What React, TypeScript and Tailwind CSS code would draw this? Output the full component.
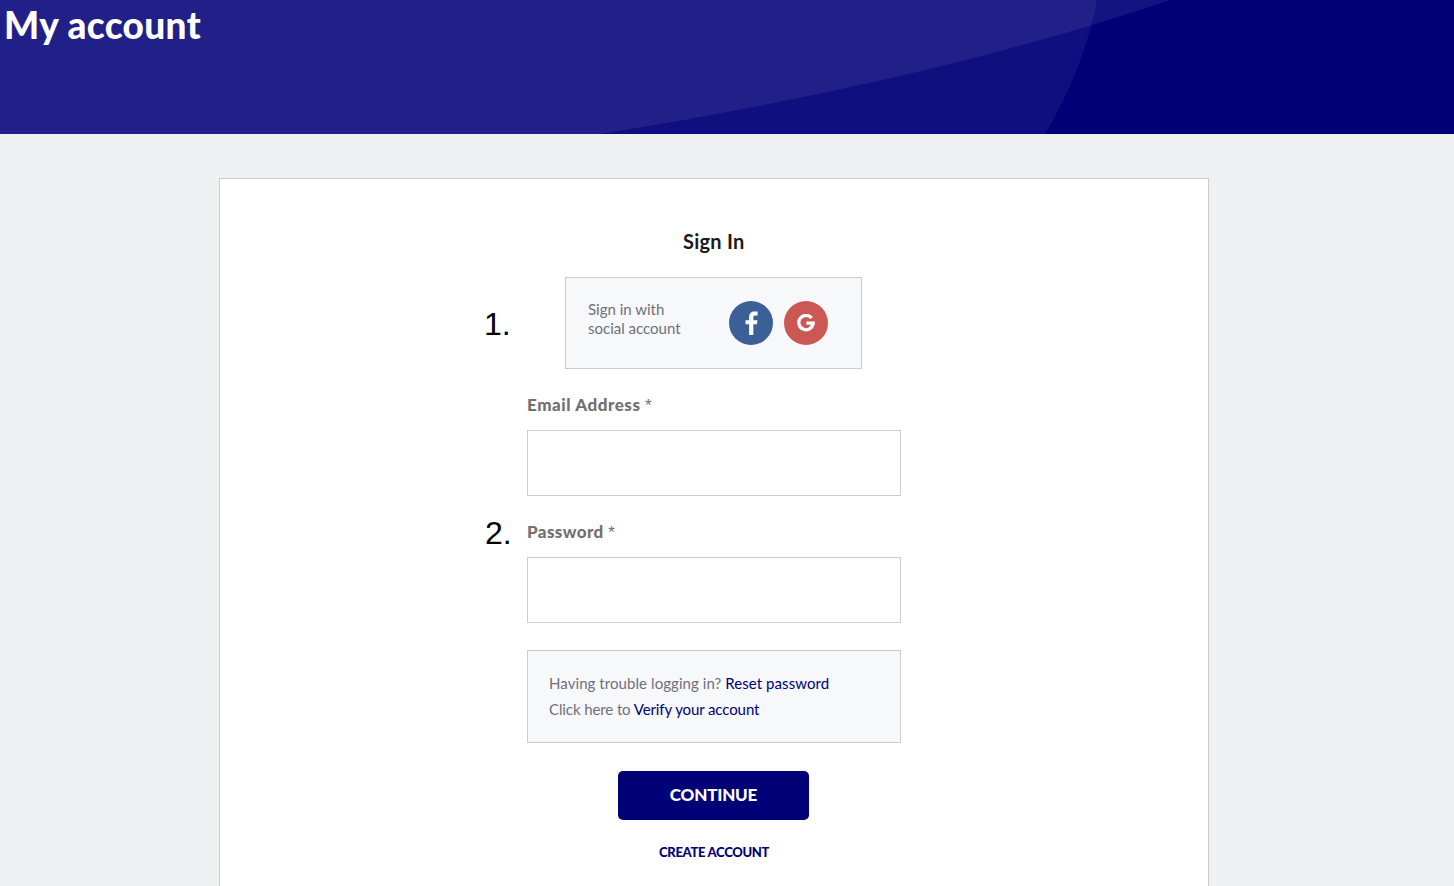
export default function App() {
  return (
    <div className="h-[886px] overflow-hidden bg-[#eff0f2] font-['Lato',sans-serif]">
      <header className="relative h-[134px] overflow-hidden bg-[#000077]">
        <svg className="absolute inset-0" width="1454" height="134" viewBox="0 0 1454 134" aria-hidden="true">
          <path d="M0 0H1097C1088 48 1070 92 1045 134H0Z" fill="#ffffff" fillOpacity="0.06" />
          <path d="M0 0H1170C1000 58 800 102 600 134H0Z" fill="#ffffff" fillOpacity="0.075" />
        </svg>
        <h1 className="relative ml-[4px] pt-[3px] text-[37px] leading-[44px] font-black tracking-[0.35px] text-white">My account</h1>
      </header>
      <main className="mt-[44px] ml-[219px] w-[990px] border border-[#cccccc] bg-white pt-[48px] pb-10">
        <div className="relative mx-auto flex w-[374px] flex-col items-start">
          <h2 className="ml-[156px] h-[29px] text-[20px] leading-[28px] font-bold tracking-[0.25px] whitespace-nowrap text-[#1a1a1a]">Sign In</h2>
          <span className="absolute top-[78px] left-[-43px] font-['Liberation_Sans',sans-serif] text-[32px] leading-[38px] text-black">1.</span>
          <div className="mt-[21px] ml-[38px] flex h-[92px] w-[297px] items-center border border-[#cccccc] bg-[#f7f8fa] pl-[22px]">
            <p className="mt-[-8px] w-[141px] text-[15px] leading-[19px] text-[#70707a]">Sign in with<br />social account</p>
            <div className="flex gap-[11px]">
              <span className="flex h-[44px] w-[44px] items-center justify-center rounded-full bg-[#3a6097]">
                <svg width="13" height="24" viewBox="0 0 14 26" aria-hidden="true"><path d="M9 26V14.4h3.9l.6-4.5H9V7c0-1.3.4-2.2 2.2-2.2h2.4V.8C13.200.7 11.800.6 10.200.6 6.800.6 4.400 2.700 4.400 6.500v3.400H.500v4.500h3.900V26Z" fill="#ffffff" /></svg>
              </span>
              <span className="flex h-[44px] w-[44px] items-center justify-center rounded-full bg-[#cc5855]">
                <svg width="18" height="18" viewBox="0 0 20 20" aria-hidden="true"><path d="M16.200 4.400A8 8 0 1 0 18 10.200H10.500" fill="none" stroke="#ffffff" strokeWidth="3.600" /></svg>
              </span>
            </div>
          </div>
          <div className="mt-[25px] w-full">
            <label className="block h-[36px] text-[17px] leading-[22px] font-black tracking-[0.55px] text-[#707070]">Email Address <span className="font-['Liberation_Sans',sans-serif] text-[17px] font-normal">*</span></label>
            <input type="text" aria-label="Email Address" className="block h-[66px] w-full border border-[#cccccc] bg-white" />
          </div>
          <div className="relative mt-[25px] w-full">
            <span className="absolute top-[-8px] left-[-42px] font-['Liberation_Sans',sans-serif] text-[32px] leading-[40px] text-black">2.</span>
            <label className="block h-[36px] text-[17px] leading-[22px] font-black tracking-[0.4px] text-[#707070]">Password <span className="font-['Liberation_Sans',sans-serif] text-[17px] font-normal">*</span></label>
            <input type="password" aria-label="Password" className="block h-[66px] w-full border border-[#cccccc] bg-white" />
          </div>
          <div className="mt-[27px] h-[93px] w-full border border-[#cccccc] bg-[#f7f8fa] pt-[19px] pl-[21px] text-[15px] leading-[26px] text-[#70707a]">
            <p className="tracking-[0.07px]">Having trouble logging in? <a className="text-[#000077]">Reset password</a></p>
            <p className="tracking-[-0.1px]">Click here to <a className="text-[#000077]">Verify your account</a></p>
          </div>
          <button className="mt-[28px] ml-[91px] h-[49px] w-[191px] rounded-[5px] bg-[#000077] pb-[1px] text-[17px] font-black tracking-[-0.2px] text-white">CONTINUE</button>
          <a className="mt-[23px] ml-[132px] text-[13px] leading-[18px] font-black tracking-[-0.3px] whitespace-nowrap text-[#000077]">CREATE ACCOUNT</a>
        </div>
      </main>
    </div>
  );
}
